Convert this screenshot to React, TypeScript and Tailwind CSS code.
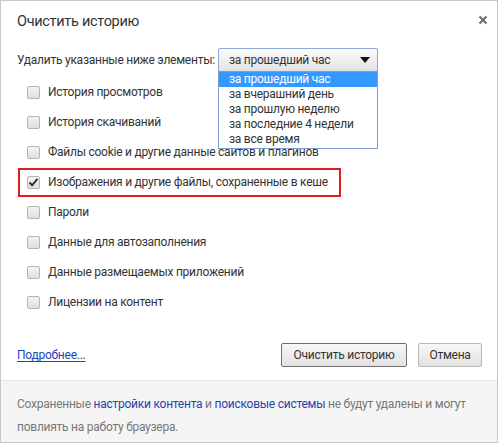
import React from "react";

const font = { fontFamily: 'Roboto, "Noto Sans", "Liberation Sans", sans-serif' };

function Box({ checked }: { checked?: boolean }) {
  return (
    <span className="relative w-[13px] h-[13px] shrink-0 rounded-[2px] border border-[#b4b4b4] bg-gradient-to-b from-[#f4f4f4] to-[#dedede] flex items-center justify-center">
      {checked && (
        <svg width="11" height="11" viewBox="0 0 11 11">
          <path d="M1.5 5.5 L4.2 8.2 L9.5 1.8" fill="none" stroke="#333" strokeWidth="2" strokeLinejoin="round" />
        </svg>
      )}
    </span>
  );
}

function Row({ label }: { label: string }) {
  return (
    <div className="h-[30px] flex items-center pl-[26px] gap-[8px] text-[12px] tracking-[-0.25px] text-[#333]">
      <Box />
      <span>{label}</span>
    </div>
  );
}

export default function App() {
  const rows = [
    "История просмотров",
    "История скачиваний",
    "Файлы cookie и другие данные сайтов и плагинов",
  ];
  const rows2 = [
    "Пароли",
    "Данные для автозаполнения",
    "Данные размещаемых приложений",
    "Лицензии на контент",
  ];
  return (
    <div style={font} className="w-[498px] h-[443px] border border-[#c9c9c9] bg-white flex flex-col relative text-[#333]">
      <div className="h-[42px] flex items-start justify-between pl-[16px] pr-[8px] pt-[10px]">
        <span className="text-[14.5px] tracking-[-0.3px] text-[#333]">Очистить историю</span>
        <svg width="10" height="10" viewBox="0 0 10 10" className="mt-[4px] mr-[1px]">
          <path d="M1.5 1.5 L8.5 8.5 M8.5 1.5 L1.5 8.5" stroke="#6b6b6b" strokeWidth="2" />
        </svg>
      </div>
      <div className="mt-[5px] flex items-center pl-[16px] h-[24px] relative">
        <span className="text-[12px] tracking-[-0.25px] w-[201px] whitespace-nowrap">Удалить указанные ниже элементы:</span>
        <div className="w-[160px] h-[24px] border border-[#8fa9d4] rounded-[2px] bg-gradient-to-b from-[#fbfbfb] to-[#e3e3e3] flex items-center justify-between pl-[10px] pr-[7px] text-[12px] tracking-[-0.25px]">
          <span>за прошедший час</span>
          <svg width="10" height="6" viewBox="0 0 10 6">
            <path d="M0 0 H10 L5 6 Z" fill="#111" />
          </svg>
        </div>
        <div className="absolute left-[217px] top-[23px] w-[160px] border border-[#7f9dd0] bg-white z-10 text-[12px] tracking-[-0.25px] leading-[15px] pb-[1px]">
          <div className="bg-[#3399ff] text-white pl-[10px]">за прошедший час</div>
          <div className="pl-[10px]">за вчерашний день</div>
          <div className="pl-[10px]">за прошлую неделю</div>
          <div className="pl-[10px]">за последние 4 недели</div>
          <div className="pl-[10px]">за все время</div>
        </div>
      </div>
      <div className="mt-[5px] flex flex-col">
        {rows.map((r) => (
          <Row key={r} label={r} />
        ))}
        <div className="h-[30px] flex items-center">
          <div className="ml-[17px] w-[323px] h-[29px] border-2 border-[#e01b22] flex items-center pl-[7px] gap-[8px] text-[12px] tracking-[-0.25px] whitespace-nowrap">
            <Box checked />
            <span>Изображения и другие файлы, сохраненные в кеше</span>
          </div>
        </div>
        {rows2.map((r) => (
          <Row key={r} label={r} />
        ))}
      </div>
      <div className="mt-[26px] flex items-center justify-between pl-[16px] pr-[15px] h-[24px]">
        <a className="text-[12px] tracking-[-0.25px] text-[#1a44b8] underline underline-offset-2 cursor-pointer">Подробнее...</a>
        <div className="flex gap-[11px]">
          <button className="h-[24px] w-[126px] border border-[#6f6f6f] rounded-[2px] bg-gradient-to-b from-[#f7f7f7] to-[#e2e2e2] text-[12px] tracking-[-0.25px] text-[#333]">
            Очистить историю
          </button>
          <button className="h-[24px] w-[64px] border border-[#b8b8b8] rounded-[2px] bg-gradient-to-b from-[#f7f7f7] to-[#e2e2e2] text-[12px] tracking-[-0.25px] text-[#333]">
            Отмена
          </button>
        </div>
      </div>
      <div className="mt-auto h-[62px] border-t border-[#e3e3e3] bg-[#f5f5f5] pl-[16px] pr-[20px] pt-[12px] text-[12px] tracking-[-0.25px] leading-[23px] text-[#777]">
        <p>
          <span>Сохраненные </span>
          <span className="text-[#2a3fae]">настройки контента</span>
          <span> и </span>
          <span className="text-[#2a3fae]">поисковые системы</span>
          <span> не будут удалены и могут </span>
          <span>повлиять на работу браузера.</span>
        </p>
      </div>
    </div>
  );
}
